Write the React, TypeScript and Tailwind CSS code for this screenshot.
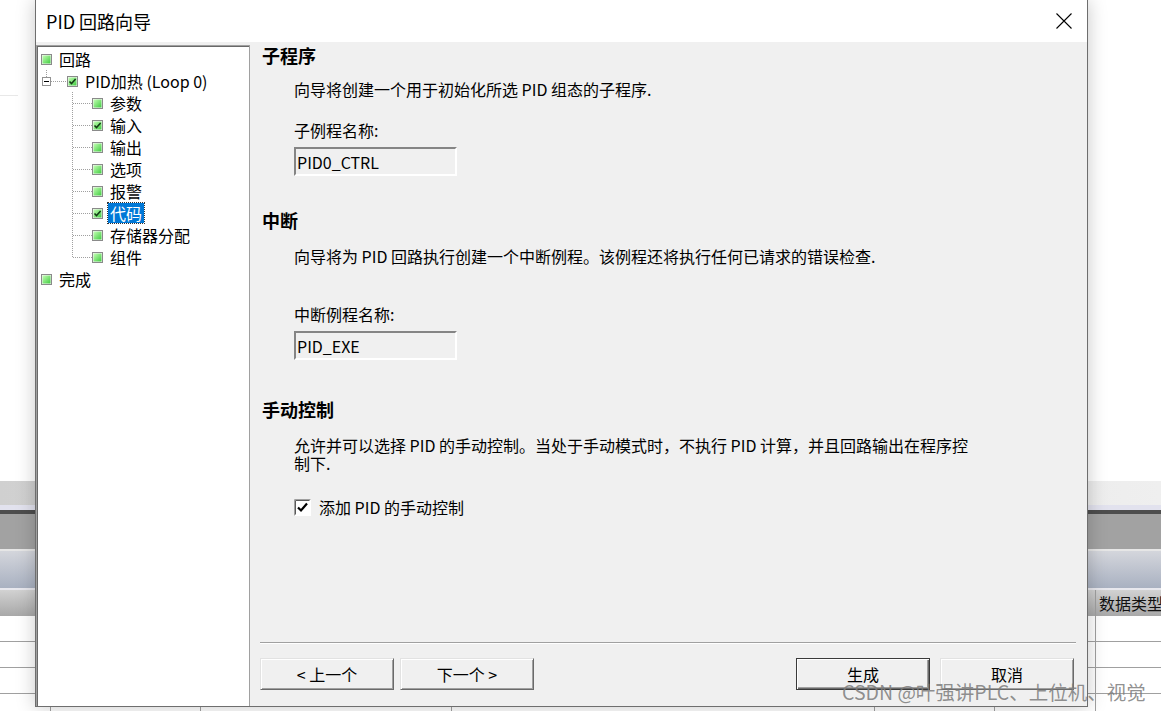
import React from 'react';

const treeChildren = [
  { label: '参数' },
  { label: '输入', checked: true },
  { label: '输出' },
  { label: '选项' },
  { label: '报警' },
  { label: '代码', checked: true, selected: true },
  { label: '存储器分配' },
  { label: '组件', last: true },
];

// column widths of the table behind the dialog
const cols = [51, 150, 251, 423, 120, 101, 65];

function GreenBox({ checked }: { checked?: boolean }) {
  return (
    <svg width="11" height="11" viewBox="0 0 11 11" className="shrink-0">
      <defs>
        <linearGradient id="gb" x1="0" y1="0" x2="1" y2="1">
          <stop offset="0" stopColor="#c4ffb4" />
          <stop offset="1" stopColor="#40cc40" />
        </linearGradient>
      </defs>
      <rect x="0.5" y="0.5" width="10" height="10" fill="#f4f4f4" stroke="#8a8a8a" />
      <rect x="1.5" y="1.5" width="8" height="8" fill="url(#gb)" />
      {checked && <path d="M2.5 5.4 L4.5 7.6 L8.6 3" fill="none" stroke="#143a16" strokeWidth="1.5" />}
    </svg>
  );
}

function Label({ text, selected }: { text: string; selected?: boolean }) {
  return (
    <span
      className={`ml-[5px] h-[20px] px-[2px] text-[16px] leading-[20px] whitespace-nowrap ${
        selected ? 'bg-[#0078d7] text-white outline-1 outline-dotted outline-[#333]' : 'text-black'
      }`}
    >
      {text}
    </span>
  );
}

function TreePanel() {
  return (
    <div className="mt-[3px] flex w-[214px] shrink-0 border-t border-r border-l border-[#a0a0a0] bg-white">
      <div className="flex-1 border-t border-l border-[#696969] pt-[1px]">
        <div className="flex h-[22px] items-center pl-[3px]">
          <GreenBox />
          <Label text="回路" />
        </div>
        <div className="flex h-[22px] items-center">
          <svg width="29" height="22" className="shrink-0">
            <line x1="8.5" y1="0" x2="8.5" y2="7" stroke="#a0a0a0" strokeDasharray="1 1" />
            <rect x="4.5" y="7.5" width="8" height="8" fill="#fff" stroke="#929292" />
            <line x1="6" y1="11.5" x2="11" y2="11.5" stroke="#000" />
            <line x1="13" y1="11.5" x2="29" y2="11.5" stroke="#a0a0a0" strokeDasharray="1 1" />
          </svg>
          <GreenBox checked />
          <Label text="PID加热 (Loop 0)" />
        </div>
        {treeChildren.map((c, i) => (
          <div key={i} className="flex h-[22px] items-center">
            <svg width="54" height="22" className="shrink-0">
              <line x1="34.5" y1="0" x2="34.5" y2={c.last ? 11.5 : 22} stroke="#a0a0a0" strokeDasharray="1 1" />
              <line x1="35" y1="11.5" x2="54" y2="11.5" stroke="#a0a0a0" strokeDasharray="1 1" />
            </svg>
            <GreenBox checked={c.checked} />
            <Label text={c.label} selected={c.selected} />
          </div>
        ))}
        <div className="flex h-[22px] items-center pl-[3px]">
          <GreenBox />
          <Label text="完成" />
        </div>
      </div>
    </div>
  );
}

function Field({ value }: { value: string }) {
  return (
    <div className="mt-[7px] ml-[44px] flex h-[29px] w-[163px] items-center border-2 border-t-[#858585] border-r-white border-b-white border-l-[#858585] pl-[1px] text-[16px] text-black">
      {value}
    </div>
  );
}

function Btn({ text, primary }: { text: string; primary?: boolean }) {
  return (
    <button
      className={`h-[32px] w-[134px] bg-[#f0f0f0] text-[16px] text-black ${
        primary
          ? 'border border-[#3a3a3a] shadow-[inset_1px_1px_0_#fff,inset_-1px_-1px_0_#6a6a6a,inset_-2px_-2px_0_#a0a0a0]'
          : 'border border-t-[#e2e2e2] border-r-[#6a6a6a] border-b-[#6a6a6a] border-l-[#e2e2e2] shadow-[inset_1px_1px_0_#fff,inset_-1px_-1px_0_#a0a0a0]'
      }`}
    >
      {text}
    </button>
  );
}

function RightPane() {
  return (
    <div className="flex flex-1 flex-col text-black">
      <h2 className="mt-[2px] ml-[12px] h-[22px] text-[18px] leading-[22px] font-bold">子程序</h2>
      <p className="mt-[13px] ml-[44px] text-[16px] leading-[20px]">向导将创建一个用于初始化所选 PID 组态的子程序.</p>
      <p className="mt-[21px] ml-[44px] text-[16px] leading-[20px]">子例程名称:</p>
      <Field value="PID0_CTRL" />

      <h2 className="mt-[33px] ml-[12px] h-[22px] text-[18px] leading-[22px] font-bold">中断</h2>
      <p className="mt-[15px] ml-[44px] text-[16px] leading-[20px]">
        向导将为 PID 回路执行创建一个中断例程。该例程还将执行任何已请求的错误检查.
      </p>
      <p className="mt-[38px] ml-[44px] text-[16px] leading-[20px]">中断例程名称:</p>
      <Field value="PID_EXE" />

      <h2 className="mt-[38px] ml-[12px] h-[22px] text-[18px] leading-[22px] font-bold">手动控制</h2>
      <p className="mt-[16px] ml-[44px] text-[16px] leading-[18px]">
        允许并可以选择 PID 的手动控制。当处于手动模式时，不执行 PID 计算，并且回路输出在程序控
        <br />
        制下.
      </p>
      <div className="mt-[25px] ml-[44px] flex h-[20px] items-center gap-[8px]">
        <svg width="17" height="17" viewBox="0 0 17 17" className="shrink-0">
          <rect x="0" y="0" width="17" height="17" fill="#fff" />
          <path d="M0.5 16.5 V0.5 H16.5" fill="none" stroke="#a0a0a0" />
          <path d="M1.5 15.5 V1.5 H15.5" fill="none" stroke="#5a5a5a" />
          <path d="M4 8.5 L7 11.5 L13 4.5" fill="none" stroke="#000" strokeWidth="2.2" />
        </svg>
        <span className="text-[16px] leading-[20px]">添加 PID 的手动控制</span>
      </div>

      <div className="flex-1" />
      <div className="mr-[11px] ml-[10px] h-px bg-[#a0a0a0]" />
      <div className="mr-[11px] ml-[10px] h-px bg-white" />
      <div className="mt-[14px] mr-[13px] mb-[16px] ml-[10px] flex">
        <div className="flex gap-[6px]">
          <Btn text="< 上一个" />
          <Btn text="下一个 >" />
        </div>
        <div className="ml-auto flex gap-[10px]">
          <Btn text="生成" primary />
          <Btn text="取消" />
        </div>
      </div>
    </div>
  );
}

function Dialog() {
  return (
    <div className="absolute top-0 left-[35px] flex h-[707px] w-[1053px] flex-col border-r border-b border-l border-[#6e6e6e] bg-[#f0f0f0] shadow-[0_0_18px_rgba(0,0,0,0.22)]">
      <div className="flex h-[42px] shrink-0 items-center justify-between bg-white pr-[15px] pl-[10px]">
        <span className="text-[18px] leading-[24px] text-black">PID 回路向导</span>
        <svg width="16" height="16" viewBox="0 0 16 16">
          <path d="M0.5 0.5 L15.5 15.5 M15.5 0.5 L0.5 15.5" stroke="#000" strokeWidth="1.1" />
        </svg>
      </div>
      <div className="flex min-h-0 flex-1">
        <TreePanel />
        <RightPane />
      </div>
    </div>
  );
}

function TableRow({ header }: { header?: boolean }) {
  return (
    <div
      className={`flex h-[26px] shrink-0 ${
        header ? 'bg-linear-to-b from-[#d2d2d2] to-[#a8a8a8]' : 'border-b border-[#a0a0a0] bg-white'
      }`}
    >
      {cols.map((w, i) => (
        <div
          key={i}
          style={{ width: w }}
          className={`shrink-0 border-r border-[#a0a0a0] ${i === cols.length - 1 ? 'border-r-0' : ''}`}
        >
          {header && i === cols.length - 1 && (
            <span className="pl-[3px] text-[16px] leading-[26px] whitespace-nowrap text-[#111]">数据类型</span>
          )}
        </div>
      ))}
    </div>
  );
}

export default function App() {
  return (
    <div className="relative h-[711px] w-[1161px] overflow-hidden bg-white font-['Noto_Sans_CJK_SC','Noto_Sans',sans-serif]">
      <div className="flex h-full flex-col">
        <div className="h-[481px] shrink-0 bg-white">
          <div className="mt-[95px] h-px w-[18px] bg-[#e8e8e8]" />
        </div>
        <div className="h-[24px] shrink-0 bg-linear-to-r from-[#d0d0d0] to-[#efefef]" />
        <div className="h-[5px] shrink-0 bg-[#e2e2ee]" />
        <div className="h-[4px] shrink-0 bg-[#4e4e4e]" />
        <div className="h-[35px] shrink-0 bg-[#a2a2a2]" />
        <div className="h-[2px] shrink-0 bg-[#e6e6e6]" />
        <div className="h-[37px] shrink-0 bg-linear-to-b from-[#d4d6dc] to-[#a9b1c1]" />
        <div className="h-[2px] shrink-0 bg-[#e8e8ee]" />
        <TableRow header />
        <TableRow />
        <TableRow />
        <TableRow />
        <TableRow />
      </div>
      <Dialog />
      <div className="pointer-events-none absolute top-[680px] left-[842px] text-[19.5px] leading-[24px] whitespace-nowrap text-[rgba(125,125,125,0.85)]">
        CSDN @叶强讲PLC、上位机、视觉
      </div>
    </div>
  );
}
